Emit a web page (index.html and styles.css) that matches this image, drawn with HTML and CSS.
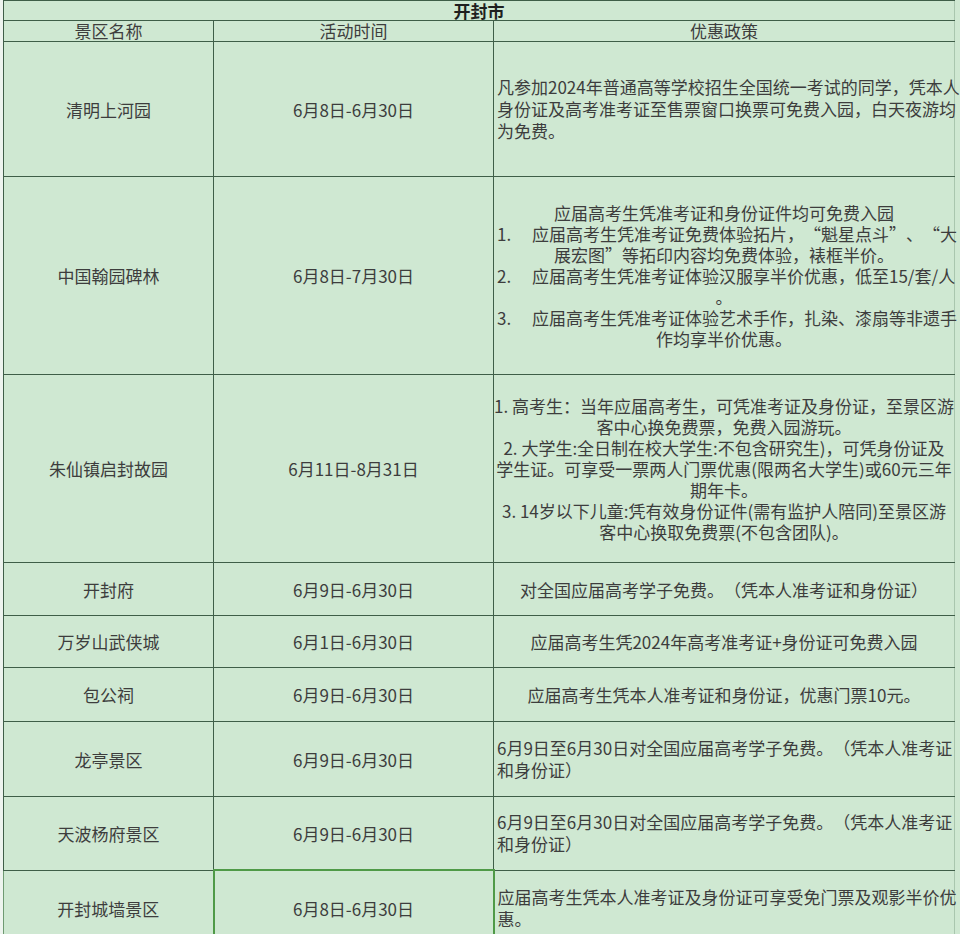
FILE: index.html
```html
<!DOCTYPE html>
<html lang="zh-CN">
<head>
<meta charset="utf-8">
<title>开封市</title>
<link rel="stylesheet" href="styles.css">
</head>
<body>
<div class="page">
<table class="sheet">
  <colgroup>
    <col class="c-name">
    <col class="c-time">
    <col class="c-policy">
  </colgroup>
  <tr class="r-cut"><td></td><td></td><td></td></tr>
  <tr class="r-title"><td colspan="3" class="title">开封市</td></tr>
  <tr class="r-head"><td>景区名称</td><td>活动时间</td><td>优惠政策</td></tr>
  <tr class="r1">
    <td>清明上河园</td><td>6月8日-6月30日</td>
    <td class="left">凡参加2024年普通高等学校招生全国统一考试的同学，凭本人<br>身份证及高考准考证至售票窗口换票可免费入园，白天夜游均<br>为免费。</td>
  </tr>
  <tr class="r2">
    <td>中国翰园碑林</td><td>6月8日-7月30日</td>
    <td class="center">
      <div class="ln">应届高考生凭准考证和身份证件均可免费入园</div>
      <div class="ln"><span class="num">1.</span>应届高考生凭准考证免费体验拓片，<span class="fw">“</span>魁星点斗<span class="fw">”</span>、<span class="fw">“</span>大</div>
      <div class="ln">展宏图<span class="fw">”</span>等拓印内容均免费体验，裱框半价。</div>
      <div class="ln"><span class="num">2.</span>应届高考生凭准考证体验汉服享半价优惠，低至15/套/人</div>
      <div class="ln">。</div>
      <div class="ln"><span class="num">3.</span>应届高考生凭准考证体验艺术手作，扎染、漆扇等非遗手</div>
      <div class="ln">作均享半价优惠。</div>
    </td>
  </tr>
  <tr class="r3">
    <td>朱仙镇启封故园</td><td>6月11日-8月31日</td>
    <td class="center">
      <div class="ln">1. 高考生：当年应届高考生，可凭准考证及身份证，至景区游</div>
      <div class="ln">客中心换免费票，免费入园游玩。</div>
      <div class="ln">2. 大学生:全日制在校大学生:不包含研究生)，可凭身份证及</div>
      <div class="ln">学生证。可享受一票两人门票优惠(限两名大学生)或60元三年</div>
      <div class="ln">期年卡。</div>
      <div class="ln">3. 14岁以下儿童:凭有效身份证件(需有监护人陪同)至景区游</div>
      <div class="ln">客中心换取免费票(不包含团队)。</div>
    </td>
  </tr>
  <tr class="r4">
    <td>开封府</td><td>6月9日-6月30日</td>
    <td class="center">对全国应届高考学子免费。（凭本人准考证和身份证）</td>
  </tr>
  <tr class="r5">
    <td>万岁山武侠城</td><td>6月1日-6月30日</td>
    <td class="center">应届高考生凭2024年高考准考证+身份证可免费入园</td>
  </tr>
  <tr class="r6">
    <td>包公祠</td><td>6月9日-6月30日</td>
    <td class="center">应届高考生凭本人准考证和身份证，优惠门票10元。</td>
  </tr>
  <tr class="r7">
    <td>龙亭景区</td><td>6月9日-6月30日</td>
    <td class="left">6月9日至6月30日对全国应届高考学子免费。（凭本人准考证<br>和身份证）</td>
  </tr>
  <tr class="r8">
    <td>天波杨府景区</td><td>6月9日-6月30日</td>
    <td class="left">6月9日至6月30日对全国应届高考学子免费。（凭本人准考证<br>和身份证）</td>
  </tr>
  <tr class="r9">
    <td class="first-sel">开封城墙景区</td><td class="sel">6月8日-6月30日</td>
    <td class="left">应届高考生凭本人准考证及身份证可享受免门票及观影半价优<br>惠。</td>
  </tr>
</table>
</div>
</body>
</html>
```

FILE: styles.css
```css
html, body {
  margin: 0;
  padding: 0;
}
body {
  background: #cfe8d2;
  width: 960px;
  height: 934px;
  overflow: hidden;
}
.page {
  border-left: 3px solid #eef4ef;
  height: 934px;
  box-sizing: border-box;
}
.sheet {
  border-collapse: collapse;
  table-layout: fixed;
  width: 951px;
  background: #cfe8d2;
  font-family: "Noto Sans CJK SC", sans-serif;
  font-size: 17px;
  line-height: 21px;
  color: #3d3d3d;
  text-spacing-trim: space-all;
}
.c-name { width: 210px; }
.c-time { width: 280px; }
.c-policy { width: 461px; }
.sheet td {
  border: 1px solid #3f5e48;
  padding: 0;
  text-align: center;
  vertical-align: middle;
  white-space: nowrap;
  overflow: visible;
}
.sheet tr td:last-child {
  border-right-color: #a9c6ae;
}
.r-cut td {
  height: 0;
  border-top: none;
  line-height: 0;
  font-size: 0;
}
.r-title td { height: 18px; line-height: 19px; }
.title {
  font-weight: bold;
  color: #1f1f1f;
  padding-top: 1px;
}
.r-head td { height: 20px; line-height: 20px; }
.r1 td { height: 134px; }
.r2 td { height: 197px; }
.r3 td { height: 187px; }
.r4 td { height: 52px; }
.r5 td { height: 51px; }
.r6 td { height: 53px; }
.r7 td { height: 74px; }
.r8 td { height: 72px; }
.r9 td { height: 74px; }
.sheet td.left {
  text-align: left;
  padding-left: 3px;
  line-height: 22px;
}
.sheet td.center { text-align: center; }
.ln { white-space: nowrap; }
.fw { font-feature-settings: "fwid" 1; }
.num {
  display: inline-block;
  width: 35px;
  text-align: left;
}
.r2 td.center .ln:nth-child(2),
.r2 td.center .ln:nth-child(4),
.r2 td.center .ln:nth-child(6) {
  text-align: left;
  padding-left: 3px;
}
.sheet td.first-sel {
  border-left: 1px solid #6f9a72;
}
.sheet td.sel {
  border: 2px solid #4f9a47;
}
```
